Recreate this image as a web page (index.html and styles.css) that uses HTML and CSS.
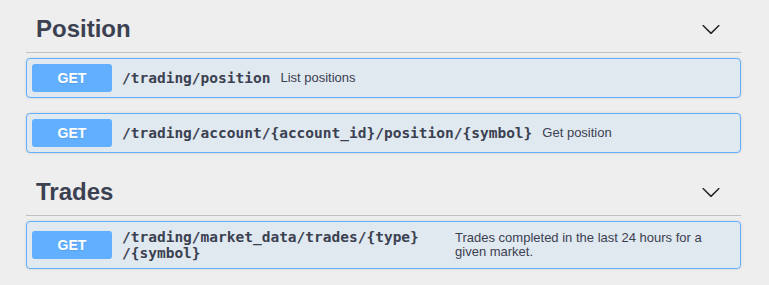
FILE: index.html
```html
<!DOCTYPE html>
<html lang="en">
<head>
  <meta charset="UTF-8" />
  <title>Trading API</title>
  <link rel="stylesheet" href="styles.css">
</head>
<body>
  <div class="wrapper">
    <section class="tag-section">
      <h3 class="tag-heading">
        <span class="tag-title">Position</span>
        <svg class="arrow" width="20" height="20" viewBox="0 0 20 20"><path d="M17.418 6.109c.272-.268.709-.268.979 0s.271.701 0 .969l-7.908 7.83c-.27.268-.707.268-.979 0l-7.908-7.830c-.27-.268-.27-.701 0-.969.271-.268.709-.268.979 0L10 13.25l7.418-7.141z"/></svg>
      </h3>

      <div class="opblock">
        <div class="opblock-summary">
          <span class="method">GET</span>
          <span class="path">/trading<wbr>/position</span>
          <div class="description">List positions</div>
        </div>
      </div>

      <div class="opblock">
        <div class="opblock-summary">
          <span class="method">GET</span>
          <span class="path">/trading<wbr>/account<wbr>/{account_id}<wbr>/position<wbr>/{symbol}</span>
          <div class="description">Get position</div>
        </div>
      </div>
    </section>

    <section class="tag-section">
      <h3 class="tag-heading">
        <span class="tag-title">Trades</span>
        <svg class="arrow" width="20" height="20" viewBox="0 0 20 20"><path d="M17.418 6.109c.272-.268.709-.268.979 0s.271.701 0 .969l-7.908 7.83c-.27.268-.707.268-.979 0l-7.908-7.830c-.27-.268-.27-.701 0-.969.271-.268.709-.268.979 0L10 13.25l7.418-7.141z"/></svg>
      </h3>

      <div class="opblock">
        <div class="opblock-summary">
          <span class="method">GET</span>
          <span class="path">/trading<wbr>/market_data<wbr>/trades<wbr>/{type}<wbr>/{symbol}</span>
          <div class="description">Trades completed in the last 24 hours for a given market.</div>
        </div>
      </div>
    </section>
  </div>
</body>
</html>
```

FILE: styles.css
```css
* {
  margin: 0;
  padding: 0;
  box-sizing: border-box;
}

body {
  font-family: "Liberation Sans", Arial, sans-serif;
  background: #eeeeee;
  color: #3b4151;
}

.wrapper {
  padding: 5px 28px 0 26px;
}

.tag-heading {
  display: flex;
  align-items: center;
  justify-content: space-between;
  padding: 10px 20px 10px 10px;
  border-bottom: 1px solid #bfc1c5;
  margin-bottom: 5px;
}

.tag-title {
  font-size: 24px;
  font-weight: 700;
  line-height: 27px;
  color: #3b4151;
}

.arrow {
  fill: #222;
}

.opblock {
  background: #e0e8f0;
  border: 1px solid #61affe;
  border-radius: 4px;
  box-shadow: 0 0 3px rgba(0, 0, 0, 0.12);
  margin-bottom: 15px;
}

.opblock-summary {
  display: flex;
  align-items: center;
  padding: 5px;
}

.method {
  flex-shrink: 0;
  width: 80px;
  height: 28px;
  display: flex;
  align-items: center;
  justify-content: center;
  background: #61affe;
  border-radius: 3px;
  color: #fff;
  font-size: 14px;
  font-weight: 700;
  text-shadow: 0 1px 0 rgba(0, 0, 0, 0.1);
}

.path {
  flex: 0 0.6 auto;
  padding: 2px 10px;
  font-family: "DejaVu Sans Mono", monospace;
  font-size: 14.5px;
  font-weight: 700;
  line-height: 16px;
  color: #3b4151;
}

.description {
  flex: 1 1 auto;
  padding-right: 28px;
  font-size: 13px;
  line-height: 14px;
  color: #3b4151;
}
```
